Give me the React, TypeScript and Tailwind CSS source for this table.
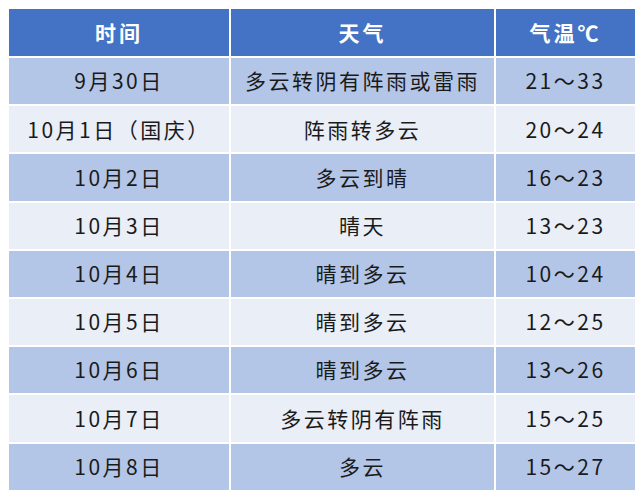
const ROWS = [
  { date: "9月30日", weather: "多云转阴有阵雨或雷雨", temp: "21～33" },
  { date: "10月1日（国庆）", weather: "阵雨转多云", temp: "20～24" },
  { date: "10月2日", weather: "多云到晴", temp: "16～23" },
  { date: "10月3日", weather: "晴天", temp: "13～23" },
  { date: "10月4日", weather: "晴到多云", temp: "10～24" },
  { date: "10月5日", weather: "晴到多云", temp: "12～25" },
  { date: "10月6日", weather: "晴到多云", temp: "13～26" },
  { date: "10月7日", weather: "多云转阴有阵雨", temp: "15～25" },
  { date: "10月8日", weather: "多云", temp: "15～27" },
];

const FONT = { fontFamily: '"Noto Sans CJK SC", "Noto Sans", sans-serif' };

export default function App() {
  return (
    <div className="h-[500px] w-[644px] bg-white p-[9px]" style={FONT}>
      <div className="grid grid-cols-[220px_263px_139px] gap-[2px]">
        {["时间", "天气", "气温℃"].map((h) => (
          <div
            key={h}
            className="flex h-[47px] items-center justify-center bg-[#4472c4] text-[21px] font-bold tracking-[3px] text-white"
          >
            {h}
          </div>
        ))}
        {ROWS.map((r, i) => {
          const bg = i % 2 === 0 ? "bg-[#b4c6e7]" : "bg-[#e9eef7]";
          return [r.date, r.weather, r.temp].map((c, j) => (
            <div
              key={`${i}-${j}`}
              className={`flex h-[46.2px] items-center justify-center text-[21px] tracking-[2.5px] text-[#1a1a1a] ${bg}`}
            >
              {c}
            </div>
          ));
        })}
      </div>
    </div>
  );
}
